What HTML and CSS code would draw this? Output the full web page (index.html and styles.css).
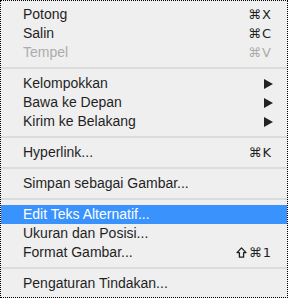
FILE: index.html
```html
<!DOCTYPE html>
<html lang="id">

<head>
    <meta charset="UTF-8">
    <meta name="viewport" content="width=device-width, initial-scale=1.0">
    <title>Menu Konteks</title>
    <link rel="stylesheet" href="styles.css">
</head>

<body>

    <div class="menu">
        <div class="item"><span>Potong</span><span class="key">⌘X</span></div>
        <div class="item"><span>Salin</span><span class="key">⌘C</span></div>
        <div class="item disabled"><span>Tempel</span><span class="key">⌘V</span></div>

        <div class="separator"></div>

        <div class="item"><span>Kelompokkan</span><svg class="arrow" width="9" height="10" viewBox="0 0 9 10"><polygon points="0,0 9,5 0,10"/></svg></div>
        <div class="item"><span>Bawa ke Depan</span><svg class="arrow" width="9" height="10" viewBox="0 0 9 10"><polygon points="0,0 9,5 0,10"/></svg></div>
        <div class="item"><span>Kirim ke Belakang</span><svg class="arrow" width="9" height="10" viewBox="0 0 9 10"><polygon points="0,0 9,5 0,10"/></svg></div>

        <div class="separator"></div>

        <div class="item"><span>Hyperlink...</span><span class="key">⌘K</span></div>

        <div class="separator"></div>

        <div class="item"><span>Simpan sebagai Gambar...</span></div>

        <div class="separator"></div>

        <div class="item selected"><span>Edit Teks Alternatif...</span></div>
        <div class="item"><span>Ukuran dan Posisi...</span></div>
        <div class="item">
            <span>Format Gambar...</span>
            <span class="key">
                <svg class="shift" width="11" height="11" viewBox="0 0 11 11"><path d="M5.5 0.9 L10 5.6 H7.6 V10.2 H3.4 V5.6 H1 Z"/></svg>⌘1
            </span>
        </div>

        <div class="separator"></div>

        <div class="item"><span>Pengaturan Tindakan...</span></div>
    </div>

</body>

</html>
```

FILE: styles.css
```css
body {
    margin: 0;
    font-family: "Liberation Sans", "DejaVu Sans", sans-serif;
    font-size: 14px;
    color: #1f1f1f;
}

.menu {
    box-sizing: border-box;
    width: 288px;
    height: 298px;
    padding: 4px 0;
    border: 1px dotted #000;
    background-color: #efefef;
}

.item {
    display: flex;
    justify-content: space-between;
    align-items: center;
    height: 19px;
    line-height: 19px;
    padding: 0 15px 0 22px;
}

.item.disabled {
    color: #acacac;
}

.item.selected {
    background-color: #3a93fd;
    color: #fff;
}

.key {
    display: flex;
    align-items: center;
    font-family: "DejaVu Sans", sans-serif;
    font-size: 13px;
    letter-spacing: 1px;
}

.shift {
    fill: none;
    stroke: currentColor;
    stroke-width: 1.3;
    stroke-linejoin: round;
    margin-right: 2px;
}

.arrow {
    fill: #222;
    margin-right: -1px;
}

.separator {
    height: 2px;
    margin: 5px 0;
    background-color: #dcdcdc;
}
```
